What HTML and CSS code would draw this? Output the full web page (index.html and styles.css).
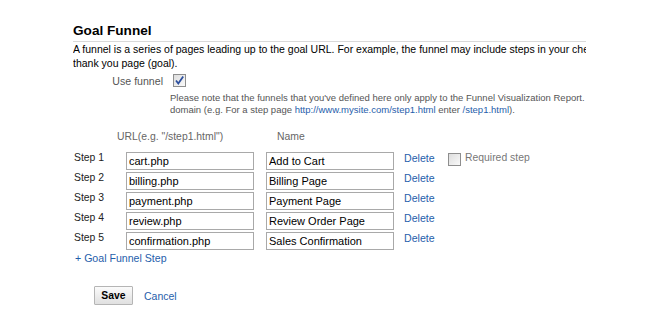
FILE: index.html
```html
<!DOCTYPE html>
<html>
<head>
    <meta charset="utf-8">
    <title>Goal Funnel</title>
    <link rel="stylesheet" href="styles.css">
</head>
<body>
    <div class="goal-funnel">
        <h2 class="section-title">Goal Funnel</h2>
        <p class="intro">A funnel is a series of pages leading up to the goal URL. For example, the funnel may include steps in your checkout process that lead you to the<br>thank you page (goal).</p>

        <div class="option-row">
            <div class="option-label">Use funnel</div>
            <div class="option-field">
                <svg class="checkbox" width="13" height="13" viewBox="0 0 13 13">
                    <defs>
                        <linearGradient id="boxFill" x1="0" y1="0" x2="1" y2="1">
                            <stop offset="0" stop-color="#dcdcdc"/>
                            <stop offset="1" stop-color="#fbfbfb"/>
                        </linearGradient>
                    </defs>
                    <rect x="0.5" y="0.5" width="12" height="12" fill="url(#boxFill)" stroke="#8e8e8e"/>
                    <path d="M3 6.5 L5.3 9.5 L10.2 2.6" fill="none" stroke="#2c4f9e" stroke-width="1.8"/>
                </svg>
                <p class="note">Please note that the funnels that you've defined here only apply to the Funnel Visualization Report.<br>domain (e.g. For a step page <a href="#">http://www.mysite.com/step1.html</a> enter <a href="#">/step1.html</a>).</p>
            </div>
        </div>

        <div class="step-head">
            <span class="col-url">URL(e.g. "/step1.html")</span>
            <span class="col-name">Name</span>
        </div>

        <div class="steps">
            <div class="step-row">
                <span class="step-label">Step 1</span>
                <input class="step-input" type="text" value="cart.php">
                <input class="step-input name-input" type="text" value="Add to Cart">
                <a class="delete" href="#">Delete</a>
                <span class="required">
                    <svg class="checkbox" width="13" height="13" viewBox="0 0 13 13">
                        <rect x="0.5" y="0.5" width="12" height="12" fill="url(#boxFill)" stroke="#8e8e8e"/>
                    </svg>
                    <span class="required-text">Required step</span>
                </span>
            </div>
            <div class="step-row">
                <span class="step-label">Step 2</span>
                <input class="step-input" type="text" value="billing.php">
                <input class="step-input name-input" type="text" value="Billing Page">
                <a class="delete" href="#">Delete</a>
            </div>
            <div class="step-row">
                <span class="step-label">Step 3</span>
                <input class="step-input" type="text" value="payment.php">
                <input class="step-input name-input" type="text" value="Payment Page">
                <a class="delete" href="#">Delete</a>
            </div>
            <div class="step-row">
                <span class="step-label">Step 4</span>
                <input class="step-input" type="text" value="review.php">
                <input class="step-input name-input" type="text" value="Review Order Page">
                <a class="delete" href="#">Delete</a>
            </div>
            <div class="step-row">
                <span class="step-label">Step 5</span>
                <input class="step-input" type="text" value="confirmation.php">
                <input class="step-input name-input" type="text" value="Sales Confirmation">
                <a class="delete" href="#">Delete</a>
            </div>
        </div>

        <a class="add-step" href="#">+ Goal Funnel Step</a>

        <div class="actions">
            <button class="save-btn">Save</button>
            <a class="cancel" href="#">Cancel</a>
        </div>
    </div>
</body>
</html>
```

FILE: styles.css
```css
body {
    margin: 0;
    background: #fff;
    font-family: "Liberation Sans", Arial, sans-serif;
    color: #000;
}

a {
    color: #1f5eab;
    text-decoration: none;
}

.goal-funnel {
    width: 513px;
    margin-left: 73px;
    padding-top: 22px;
    overflow: hidden;
}

.section-title {
    margin: 0;
    font-size: 13.6px;
    line-height: 18px;
    font-weight: bold;
    padding-bottom: 1px;
    border-bottom: 1px solid #d9d9d9;
}

.intro {
    margin: 0;
    font-size: 10.5px;
    line-height: 14px;
    white-space: nowrap;
}

.option-row {
    display: flex;
    margin-top: 2px;
}

.option-label {
    width: 90px;
    padding-right: 7px;
    padding-top: 2px;
    text-align: right;
    font-size: 10.6px;
    line-height: 14px;
    color: #555;
}

.option-field {
    flex: 1;
}

.checkbox {
    display: block;
}

.option-field .checkbox {
    margin: 2px 0 0 3px;
}

.note {
    margin: 5px 0 0;
    font-size: 9.5px;
    line-height: 11.5px;
    color: #555;
    white-space: nowrap;
}

.step-head {
    display: flex;
    margin-top: 15px;
    padding-left: 44px;
    font-size: 10.4px;
    line-height: 14px;
    color: #666;
}

.col-url {
    width: 160px;
}

.steps {
    margin-top: 7px;
}

.step-row {
    display: flex;
    align-items: flex-start;
    height: 20px;
    font-size: 10.4px;
    line-height: 14px;
}

.step-label {
    width: 52px;
    padding-left: 1px;
    color: #222;
}

.step-input {
    box-sizing: border-box;
    width: 128px;
    height: 18px;
    margin: 1px 0 0;
    padding: 0 2px;
    border: 1px solid #a9a9a9;
    font: 11px "Liberation Sans", Arial, sans-serif;
    color: #000;
    background: #fff;
}

.name-input {
    margin-left: 12px;
}

.delete {
    width: 44px;
    margin-left: 10px;
    font-size: 10.6px;
}

.required {
    display: flex;
    align-items: flex-start;
}

.required .checkbox {
    margin-top: 2px;
}

.required-text {
    margin-left: 4px;
    color: #777;
}

.add-step {
    display: block;
    margin-left: 2px;
    font-size: 10.6px;
    line-height: 14px;
}

.actions {
    display: flex;
    align-items: center;
    margin-top: 21px;
    padding-left: 21px;
}

.save-btn {
    width: 39px;
    height: 19px;
    padding: 0;
    border: 1px solid #b5b5b5;
    border-radius: 1px;
    background: linear-gradient(#fbfbfb, #e0e0e0);
    font: bold 10.4px "Liberation Sans", Arial, sans-serif;
    color: #000;
}

.cancel {
    margin-left: 11px;
    font-size: 10.5px;
}
```
